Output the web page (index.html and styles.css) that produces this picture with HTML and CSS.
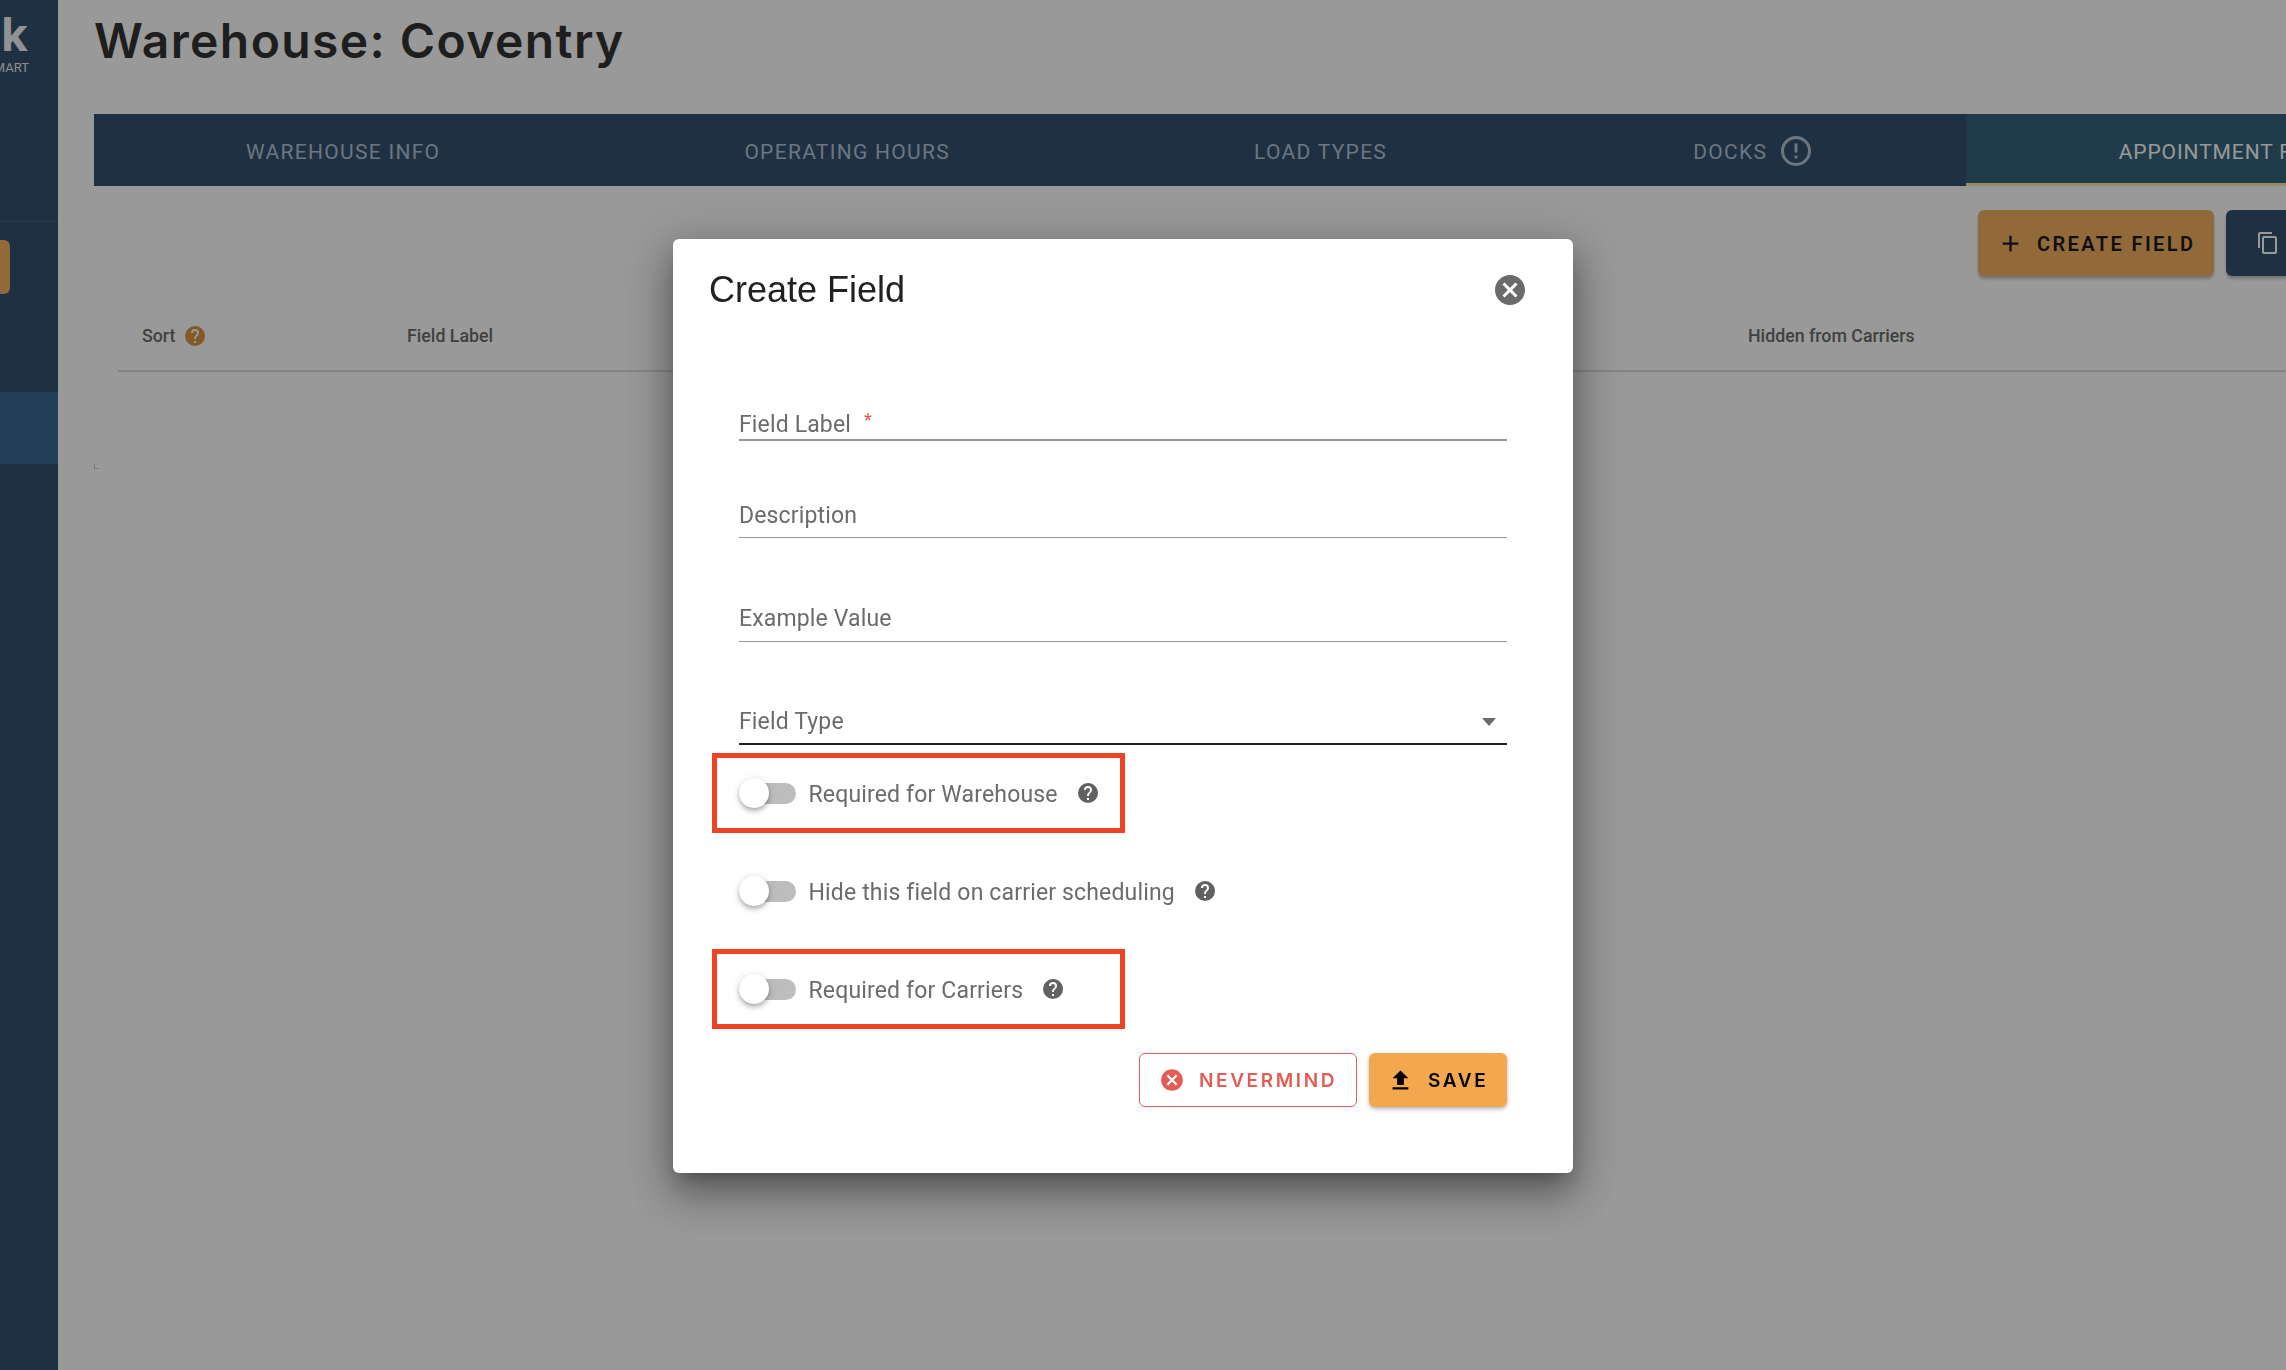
FILE: index.html
```html
<!DOCTYPE html>
<html lang="en">
<head>
<meta charset="utf-8">
<title>Warehouse: Coventry</title>
<link rel="stylesheet" href="styles.css">
</head>
<body>
<div class="app">
  <aside class="sidebar">
    <div class="logo"><span class="logo-mark">k</span><span class="logo-sub">MART</span></div>
    <div class="side-cta"></div>
    <div class="side-active"></div>
  </aside>
  <main class="main">
    <h1 class="page-title">Warehouse: Coventry</h1>
    <nav class="tabs">
      <div class="tab">WAREHOUSE INFO</div>
      <div class="tab">OPERATING HOURS</div>
      <div class="tab">LOAD TYPES</div>
      <div class="tab tab-docks">DOCKS
        <svg class="icon-alert" viewBox="0 0 24 24"><path d="M11,15H13V17H11V15M11,7H13V13H11V7M12,2C6.47,2 2,6.5 2,12A10,10 0 0,0 12,22A10,10 0 0,0 22,12A10,10 0 0,0 12,2M12,20A8,8 0 0,1 4,12A8,8 0 0,1 12,4A8,8 0 0,1 20,12A8,8 0 0,1 12,20Z"/></svg>
      </div>
      <div class="tab tab-active">APPOINTMENT FIELDS</div>
    </nav>
    <div class="toolbar">
      <button class="btn-create">
        <svg class="icon-plus" viewBox="0 0 24 24"><path d="M19,13H13V19H11V13H5V11H11V5H13V11H19V13Z"/></svg>
        <span class="btn-create-text">CREATE FIELD</span>
      </button>
      <button class="btn-copy">
        <svg class="icon-copy" viewBox="0 0 24 24"><path d="M19,21H8V7H19M19,5H8A2,2 0 0,0 6,7V21A2,2 0 0,0 8,23H19A2,2 0 0,0 21,21V7A2,2 0 0,0 19,5M16,1H4A2,2 0 0,0 2,3V17H4V3H16V1Z"/></svg>
      </button>
    </div>
    <div class="table-head">
      <div class="th">Sort
        <svg class="icon-sort-help" viewBox="0 0 24 24"><path d="M15.07,11.25L14.17,12.17C13.45,12.89 13,13.5 13,15H11V14.5C11,13.39 11.45,12.39 12.17,11.67L13.41,10.41C13.78,10.05 14,9.55 14,9C14,7.89 13.1,7 12,7A2,2 0 0,0 10,9H8A4,4 0 0,1 12,5A4,4 0 0,1 16,9C16,9.88 15.64,10.67 15.07,11.25M13,19H11V17H13M12,2A10,10 0 0,0 2,12A10,10 0 0,0 12,22A10,10 0 0,0 22,12C22,6.47 17.5,2 12,2Z"/></svg>
      </div>
      <div class="th">Field Label</div>
      <div class="th">Hidden from Carriers</div>
    </div>
    <div class="card-corner"></div>
  </main>
</div>

<div class="overlay">
  <section class="modal">
    <header class="modal-head">
      <h2 class="modal-title">Create Field</h2>
      <svg class="icon-close" viewBox="0 0 24 24"><path d="M12,2C17.53,2 22,6.47 22,12C22,17.53 17.53,22 12,22C6.47,22 2,17.53 2,12C2,6.47 6.47,2 12,2M15.59,7L12,10.59L8.41,7L7,8.41L10.59,12L7,15.59L8.41,17L12,13.41L15.59,17L17,15.59L13.41,12L17,8.41L15.59,7Z"/></svg>
    </header>
    <div class="modal-body">
      <div class="field field-label"><span>Field Label</span><span class="req">*</span></div>
      <div class="field field-desc"><span>Description</span></div>
      <div class="field field-example"><span>Example Value</span></div>
      <div class="field field-type"><span>Field Type</span><i class="caret"></i></div>

      <div class="toggle-row toggle-marked">
        <span class="toggle"><i class="knob"></i></span>
        <span class="toggle-text">Required for Warehouse</span>
        <svg class="icon-help" viewBox="0 0 24 24"><path d="M15.07,11.25L14.17,12.17C13.45,12.89 13,13.5 13,15H11V14.5C11,13.39 11.45,12.39 12.17,11.67L13.41,10.41C13.78,10.05 14,9.55 14,9C14,7.89 13.1,7 12,7A2,2 0 0,0 10,9H8A4,4 0 0,1 12,5A4,4 0 0,1 16,9C16,9.88 15.64,10.67 15.07,11.25M13,19H11V17H13M12,2A10,10 0 0,0 2,12A10,10 0 0,0 12,22A10,10 0 0,0 22,12C22,6.47 17.5,2 12,2Z"/></svg>
      </div>
      <div class="toggle-row">
        <span class="toggle"><i class="knob"></i></span>
        <span class="toggle-text">Hide this field on carrier scheduling</span>
        <svg class="icon-help" viewBox="0 0 24 24"><path d="M15.07,11.25L14.17,12.17C13.45,12.89 13,13.5 13,15H11V14.5C11,13.39 11.45,12.39 12.17,11.67L13.41,10.41C13.78,10.05 14,9.55 14,9C14,7.89 13.1,7 12,7A2,2 0 0,0 10,9H8A4,4 0 0,1 12,5A4,4 0 0,1 16,9C16,9.88 15.64,10.67 15.07,11.25M13,19H11V17H13M12,2A10,10 0 0,0 2,12A10,10 0 0,0 12,22A10,10 0 0,0 22,12C22,6.47 17.5,2 12,2Z"/></svg>
      </div>
      <div class="toggle-row toggle-marked">
        <span class="toggle"><i class="knob"></i></span>
        <span class="toggle-text">Required for Carriers</span>
        <svg class="icon-help" viewBox="0 0 24 24"><path d="M15.07,11.25L14.17,12.17C13.45,12.89 13,13.5 13,15H11V14.5C11,13.39 11.45,12.39 12.17,11.67L13.41,10.41C13.78,10.05 14,9.55 14,9C14,7.89 13.1,7 12,7A2,2 0 0,0 10,9H8A4,4 0 0,1 12,5A4,4 0 0,1 16,9C16,9.88 15.64,10.67 15.07,11.25M13,19H11V17H13M12,2A10,10 0 0,0 2,12A10,10 0 0,0 12,22A10,10 0 0,0 22,12C22,6.47 17.5,2 12,2Z"/></svg>
      </div>

      <div class="actions">
        <button class="btn-cancel">
          <svg class="icon-cancel" viewBox="0 0 24 24"><path d="M12,2C17.53,2 22,6.47 22,12C22,17.53 17.53,22 12,22C6.47,22 2,17.53 2,12C2,6.47 6.47,2 12,2M15.59,7L12,10.59L8.41,7L7,8.41L10.59,12L7,15.59L8.41,17L12,13.41L15.59,17L17,15.59L13.41,12L17,8.41L15.59,7Z"/></svg>
          <span>NEVERMIND</span>
        </button>
        <button class="btn-save">
          <svg class="icon-upload" viewBox="0 0 24 24"><path d="M9,16V10H5L12,3L19,10H15V16H9M5,20V18H19V20H5Z"/></svg>
          <span>SAVE</span>
        </button>
      </div>
    </div>
  </section>
</div>
</body>
</html>
```
FILE: styles.css
```css
* { box-sizing: border-box; }
html, body { margin: 0; height: 100%; overflow: hidden; background: #fff; }
body { font-family: Roboto, "Liberation Sans", sans-serif; }

.app { display: flex; width: 2286px; height: 1370px; overflow: hidden; }

/* sidebar */
.sidebar { flex: 0 0 58px; background: #1e3e5e; overflow: hidden; }
.logo {
  height: 222px; border-bottom: 1px solid #2f5373;
  display: flex; flex-direction: column; align-items: flex-end;
  padding-right: 30px;
}
.logo-mark { font: 700 46px/56px Inter, sans-serif; color: #f0f2f4; margin-top: 6px; }
.logo-sub { font: 400 13px/16px Roboto, sans-serif; color: #e6e9ec; margin-right: -1px; margin-top: -2px; }
.side-cta { width: 10px; height: 54px; margin-top: 18px; background: #f3a84f; border-radius: 0 6px 6px 0; }
.side-active { height: 72px; margin-top: 98px; background: #255985; }

/* main */
.main { flex: 1; min-width: 0; padding-left: 36px; overflow: hidden; position: relative; }
.page-title {
  margin: 0 0 32px; height: 82px;
  font: 600 48px/82px Inter, sans-serif; color: #1c1c1c; letter-spacing: 1.4px;
}
.tabs { display: flex; height: 72px; background: #1e3e5e; width: 2192px; }
.tab {
  flex: 0 0 auto; display: flex; align-items: center; padding: 4px 152px 0;
  font: 400 21px/1 Roboto, sans-serif; letter-spacing: 1.3px; color: #aebfd1; white-space: nowrap;
}
.tab-docks { gap: 11px; padding-left: 154px; }
.tab-active { color: #fff; background: #21536d; border-bottom: 3px solid #ffe896; padding-left: 153px; padding-top: 7px; letter-spacing: .9px; }
.icon-alert { width: 36px; height: 36px; fill: #aebfd1; margin: -2px -.5px 0 0; }

.toolbar { display: flex; justify-content: flex-end; gap: 12px; margin: 24px -12px 0 0; }
button { border: 0; margin: 0; cursor: pointer; }
.btn-create {
  width: 236px; height: 66px; background: #f3a84f; border-radius: 6px; color: #000;
  display: flex; align-items: center; gap: 13px; padding: 0 0 0 19px;
  font: 600 20px/1 Roboto, sans-serif; letter-spacing: 2.4px;
  box-shadow: 0 3px 3px rgba(0,0,0,.25);
}
.btn-create-text { padding-top: 2px; }
.icon-plus { width: 27px; height: 27px; fill: #000; flex: none; }
.btn-copy {
  width: 72px; height: 66px; background: #1e3e5e; border-radius: 6px;
  display: flex; align-items: center; padding-left: 30px;
  box-shadow: 0 3px 3px rgba(0,0,0,.25);
}
.icon-copy { width: 24px; height: 24px; fill: #fff; }

.table-head {
  display: grid; grid-template-columns: 265px 1341px 1fr;
  margin: 24px 0 0 24px; height: 72px; padding: 1px 0 0 24px;
  border-bottom: 2px solid #d8d8d8; align-items: center;
}
.th { display: flex; align-items: center; gap: 7px; font: 500 17.8px/1 Roboto, sans-serif; color: #5c5c5c; }
.icon-sort-help { width: 24px; height: 24px; fill: #d98a2f; }
.card-corner { width: 5px; height: 5px; margin-top: 92px; border-left: 1px solid #ccc; border-bottom: 1px solid #ccc; }

/* modal */
.overlay { position: fixed; inset: 0; background: rgba(33,33,33,.46); }
.modal {
  position: absolute; left: 673px; top: 239px; width: 900px; height: 934px;
  background: #fff; border-radius: 6px;
  box-shadow: 0 11px 15px -7px rgba(0,0,0,.25), 0 24px 38px 3px rgba(0,0,0,.22), 0 9px 46px 8px rgba(0,0,0,.2);
}
.modal-head { display: flex; justify-content: space-between; align-items: center; height: 100px; padding: 1px 45px 0 36px; }
.modal-title { margin: 0; font: 400 36px/1 "Liberation Sans", Arial, sans-serif; color: #212121; }
.icon-close { width: 36px; height: 36px; fill: #6b6b6b; }
.modal-body { padding: 0 66px; }

.field {
  display: flex; align-items: flex-end; height: 40px; padding-bottom: 5px;
  border-bottom: 1px solid #949494;
  font: 400 23px/1.2 Roboto, sans-serif; letter-spacing: .15px; color: #6b6b6b;
}
.field-label { margin-top: 62px; padding-bottom: 0; border-bottom-width: 2px; }
.field-desc { margin-top: 57px; padding-bottom: 7px; }
.field-example { margin-top: 64px; padding-bottom: 8px; }
.field-type { margin-top: 62px; height: 41px; padding-bottom: 7px; border-bottom: 2px solid #222; justify-content: space-between; }
.req { color: #e5534b; font-size: 18px; margin-left: 13px; align-self: flex-start; padding-top: 8px; }
.caret { width: 0; height: 0; border: 7px solid transparent; border-top: 8px solid #6b6b6b; border-bottom: 0; margin: 0 11px 10px 0; }

.toggle-row {
  display: flex; align-items: center; width: 413px; height: 80px; margin: 18px 0 0 -27px;
  padding-left: 27px; white-space: nowrap;
}
.toggle-marked { border: 5px solid #ef4423; padding-left: 22px; }
.field-type + .toggle-row { margin-top: 8px; }
.toggle { position: relative; flex: none; width: 57px; height: 21px; background: #bdbdbd; border-radius: 11px; margin-right: 12.5px; }
.knob {
  position: absolute; left: 0; top: -5px; width: 30px; height: 30px; border-radius: 50%; background: #fff;
  box-shadow: 0 2px 4px -1px rgba(0,0,0,.2), 0 4px 5px 0 rgba(0,0,0,.14), 0 1px 10px 0 rgba(0,0,0,.12);
}
.toggle-text { font: 400 23px/1.2 Roboto, sans-serif; letter-spacing: .16px; color: #6b6b6b; padding-top: 3px; }
.icon-help { flex: none; width: 24px; height: 24px; fill: #616161; margin-left: 18px; }

.actions { display: flex; justify-content: flex-end; gap: 12px; margin-top: 24px; }
.btn-cancel, .btn-save {
  height: 54px; border-radius: 6px; display: flex; align-items: center;
  font: 600 19px/1 Inter, sans-serif; letter-spacing: 2.6px;
}
.btn-cancel { width: 218px; background: #fff; border: 1px solid #e35d55; color: #e35d55; padding-left: 19px; gap: 14px; }
.icon-cancel { width: 26px; height: 26px; fill: #e35d55; flex: none; }
.btn-save { width: 138px; background: #f3a84f; color: #000; padding-left: 18px; gap: 14px; box-shadow: 0 2px 4px rgba(0,0,0,.3); }
.icon-upload { width: 27px; height: 27px; fill: #000; flex: none; }
```
